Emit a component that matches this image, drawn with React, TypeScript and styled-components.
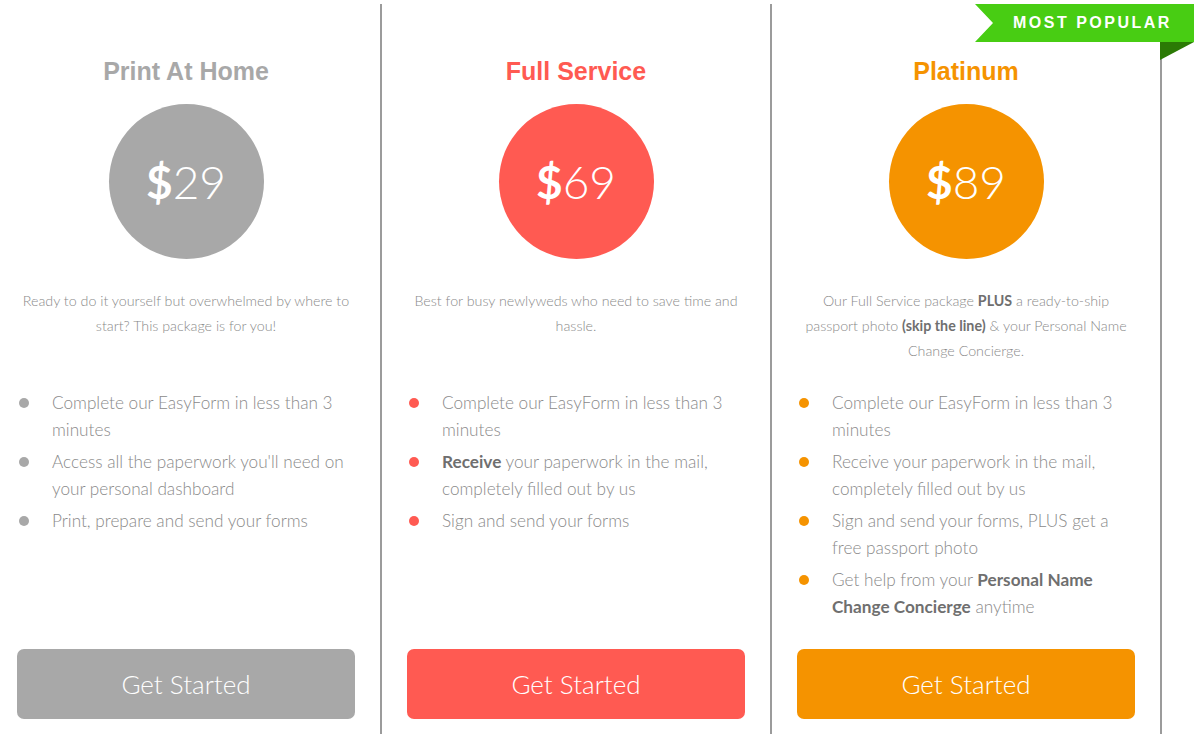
import styled, { createGlobalStyle } from "styled-components";

const GlobalStyle = createGlobalStyle`
  html, body {
    margin: 0;
    padding: 0;
    background: #ffffff;
  }
  body {
    font-family: Lato, "Helvetica Neue", Arial, sans-serif;
  }
`;

const Stage = styled.div`
  position: relative;
  width: 1194px;
  height: 734px;
  overflow: hidden;
  background: #fff;
`;

const Columns = styled.div`
  display: flex;
  margin-left: -8px;
  padding-top: 4px;
`;

const Column = styled.div`
  box-sizing: border-box;
  width: 390px;
  height: 730px;
  padding: 0 25px 15px;
  border-right: 2px solid #9b9b9b;
  display: flex;
  flex-direction: column;
  align-items: center;
`;

const Title = styled.h2<{ $color: string }>`
  margin: 53px 0 0;
  font-family: "Liberation Sans", Arial, sans-serif;
  font-weight: 700;
  font-size: 25px;
  line-height: 28px;
  color: ${(p) => p.$color};
`;

const PriceCircle = styled.div<{ $color: string }>`
  margin-top: 19px;
  width: 155px;
  height: 155px;
  border-radius: 50%;
  background: ${(p) => p.$color};
  color: #fff;
  display: flex;
  align-items: center;
  justify-content: center;
  font-family: Lato, sans-serif;
  font-size: 46px;
  font-weight: 300;
  line-height: 1;

  b {
    font-weight: 700;
  }
`;

const Description = styled.p`
  margin: 29px 0 0;
  height: 75px;
  font-size: 14.25px;
  line-height: 25px;
  font-weight: 300;
  color: #8a8a8a;
  text-align: center;

  b {
    font-weight: 700;
    color: #6f6f6f;
  }
`;

const Features = styled.ul`
  align-self: stretch;
  list-style: none;
  margin: 26px 0 0;
  padding: 0;
  display: flex;
  flex-direction: column;
  gap: 5px;
`;

const Feature = styled.li`
  display: flex;
  align-items: flex-start;
  font-size: 17.2px;
  line-height: 27px;
  font-weight: 300;
  color: #8a8a8a;

  b {
    font-weight: 700;
    color: #6f6f6f;
  }
`;

const Dot = styled.span<{ $color: string }>`
  flex: none;
  width: 10px;
  height: 10px;
  margin: 9px 23px 0 2px;
  border-radius: 50%;
  background: ${(p) => p.$color};
`;

const Button = styled.button<{ $color: string }>`
  margin-top: auto;
  align-self: stretch;
  height: 70px;
  padding-bottom: 2px;
  border: none;
  border-radius: 7px;
  background: ${(p) => p.$color};
  color: #fff;
  font-family: Lato, sans-serif;
  font-size: 26px;
  font-weight: 300;
  cursor: pointer;
`;

const Ribbon = styled.div`
  position: absolute;
  top: 4px;
  right: 0;
  width: 219px;
  height: 38px;
  box-sizing: border-box;
  padding-left: 38px;
  background: #48cd13;
  clip-path: polygon(0 0, 100% 0, 100% 100%, 0 100%, 18px 50%);
  display: flex;
  align-items: center;
  color: #fff;
  font-family: "Liberation Sans", Arial, sans-serif;
  font-weight: 700;
  font-size: 16px;
  letter-spacing: 2.5px;
`;

const RibbonFold = styled.div`
  position: absolute;
  top: 42px;
  right: 0;
  width: 34px;
  height: 18px;
  background: #2b7a05;
  clip-path: polygon(0 0, 100% 0, 0 100%);
`;

type Plan = {
  name: string;
  price: string;
  color: string;
  description: React.ReactNode;
  features: React.ReactNode[];
};

const plans: Plan[] = [
  {
    name: "Print At Home",
    price: "29",
    color: "#a8a8a8",
    description: (
      <>Ready to do it yourself but overwhelmed by where to start? This package is for you!</>
    ),
    features: [
      "Complete our EasyForm in less than 3 minutes",
      "Access all the paperwork you'll need on your personal dashboard",
      "Print, prepare and send your forms",
    ],
  },
  {
    name: "Full Service",
    price: "69",
    color: "#ff5a52",
    description: <>Best for busy newlyweds who need to save time and hassle.</>,
    features: [
      "Complete our EasyForm in less than 3 minutes",
      <>
        <b>Receive</b> your paperwork in the mail, completely filled out by us
      </>,
      "Sign and send your forms",
    ],
  },
  {
    name: "Platinum",
    price: "89",
    color: "#f59300",
    description: (
      <>
        Our Full Service package <b>PLUS</b> a ready-to-ship
        <br />
        passport photo <b>(skip the line)</b> &amp; your Personal Name Change Concierge.
      </>
    ),
    features: [
      "Complete our EasyForm in less than 3 minutes",
      "Receive your paperwork in the mail, completely filled out by us",
      "Sign and send your forms, PLUS get a free passport photo",
      <>
        Get help from your <b>Personal Name Change Concierge</b> anytime
      </>,
    ],
  },
];

export default function App() {
  return (
    <Stage>
      <GlobalStyle />
      <Columns>
        {plans.map((plan) => (
          <Column key={plan.name}>
            <Title $color={plan.color}>{plan.name}</Title>
            <PriceCircle $color={plan.color}>
              <b>$</b>
              {plan.price}
            </PriceCircle>
            <Description>{plan.description}</Description>
            <Features>
              {plan.features.map((f, i) => (
                <Feature key={i}>
                  <Dot $color={plan.color} />
                  <span>{f}</span>
                </Feature>
              ))}
            </Features>
            <Button $color={plan.color}>Get Started</Button>
          </Column>
        ))}
      </Columns>
      <Ribbon>MOST POPULAR</Ribbon>
      <RibbonFold />
    </Stage>
  );
}
